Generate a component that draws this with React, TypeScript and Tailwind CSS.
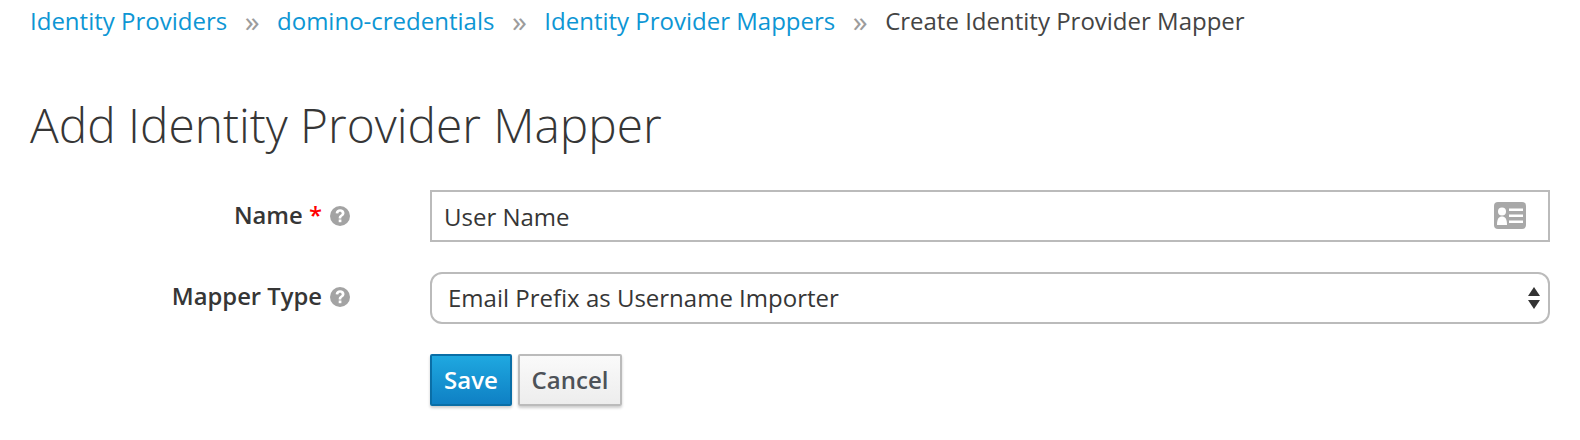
import { useState } from "react";

const crumbs = ["Identity Providers", "domino-credentials", "Identity Provider Mappers"];

const HelpIcon = () => (
  <svg viewBox="0 0 20 20" className="h-[20px] w-[20px] shrink-0">
    <circle cx="10" cy="10" r="10" fill="#a3a3a3" />
    <path
      d="M5.6 7.2C5.9 4.6 7.7 3.2 10.1 3.2C12.7 3.2 14.5 4.8 14.5 7C14.5 8.6 13.6 9.5 12.5 10.3C11.5 11 11.3 11.4 11.3 12.4H8.7C8.7 10.6 9.1 9.9 10.3 9C11.2 8.4 11.7 7.9 11.7 7.2C11.7 6.3 11 5.7 10.1 5.7C9.1 5.7 8.5 6.3 8.3 7.4Z"
      fill="#fff"
    />
    <rect x="8.7" y="13.5" width="2.7" height="2.7" fill="#fff" />
  </svg>
);

const IdCardIcon = () => (
  <svg viewBox="0 0 32 27" className="h-[27px] w-[32px]">
    <rect width="32" height="27" rx="4" fill="#a8a8a8" />
    <circle cx="8" cy="9.5" r="4" fill="#fff" />
    <path d="M3 23C3 16.5 5 14.5 8 14.5C11 14.5 13 16.5 13 23Z" fill="#fff" />
    <rect x="15" y="6.5" width="14" height="2.5" fill="#fff" />
    <rect x="15" y="12.5" width="14" height="2.5" fill="#fff" />
    <rect x="15" y="18.5" width="14" height="2.5" fill="#fff" />
  </svg>
);

const App = () => {
  const [name, setName] = useState("User Name");

  return (
    <div className="h-[440px] w-[1580px] overflow-hidden bg-white font-['Open_Sans',sans-serif] text-[#363636]">
      <div className="flex h-[42px] items-center gap-[17.5px] pl-[30px] text-[24px]">
        {crumbs.map((crumb) => (
          <div key={crumb} className="flex items-center gap-[17.5px]">
            <a className="text-[#0d96d4]">{crumb}</a>
            <span className="text-[30px] leading-none text-[#9c9c9c]">»</span>
          </div>
        ))}
        <span className="text-[#444]">Create Identity Provider Mapper</span>
      </div>

      <h1 className="mt-[48px] pl-[30px] text-[47.8px] leading-[70px] font-light">Add Identity Provider Mapper</h1>

      <form className="mt-[30px] flex flex-col">
        <div className="flex items-center">
          <label className="flex w-[350px] items-center justify-end gap-[8px] pb-[1px] text-[23.8px] font-semibold">
            <span>
              Name <span className="text-[#f00]">*</span>
            </span>
            <HelpIcon />
          </label>
          <div className="relative ml-[80px] w-[1120px]">
            <input
              value={name}
              onChange={(e) => setName(e.target.value)}
              className="h-[52px] w-full border-2 border-[#bbb] bg-white pl-[12px] text-[24px] outline-none"
            />
            <div className="absolute top-[12px] right-[24px]">
              <IdCardIcon />
            </div>
          </div>
        </div>

        <div className="mt-[30px] flex items-center">
          <label className="flex w-[350px] items-center justify-end gap-[8px] pb-[2px] text-[23.8px] font-semibold">
            <span>Mapper Type</span>
            <HelpIcon />
          </label>
          <div className="relative ml-[80px] flex h-[52px] w-[1120px] items-center rounded-[12px] border-2 border-[#bbb] bg-white pl-[16px] text-[24px]">
            <span>Email Prefix as Username Importer</span>
            <svg viewBox="0 0 12 22" className="absolute right-[8px] h-[22px] w-[12px]">
              <path d="M6 0L12 9H0Z" fill="#333" />
              <path d="M0 13H12L6 22Z" fill="#333" />
            </svg>
          </div>
        </div>

        <div className="mt-[30px] ml-[430px] flex gap-[6px]">
          <button
            type="button"
            className="h-[52px] w-[82px] rounded-[2px] border-2 border-[#0a6ea6] bg-gradient-to-b from-[#1fa8e0] to-[#0f80c4] text-[24px] font-semibold text-white shadow-[0_2px_3px_rgba(0,0,0,0.2)]"
          >
            Save
          </button>
          <button
            type="button"
            className="h-[52px] w-[104px] rounded-[2px] border-2 border-[#bbb] bg-gradient-to-b from-[#fafafa] to-[#ededed] text-[24px] font-semibold text-[#4d5258] shadow-[0_2px_3px_rgba(0,0,0,0.2)]"
          >
            Cancel
          </button>
        </div>
      </form>
    </div>
  );
};

export default App;
